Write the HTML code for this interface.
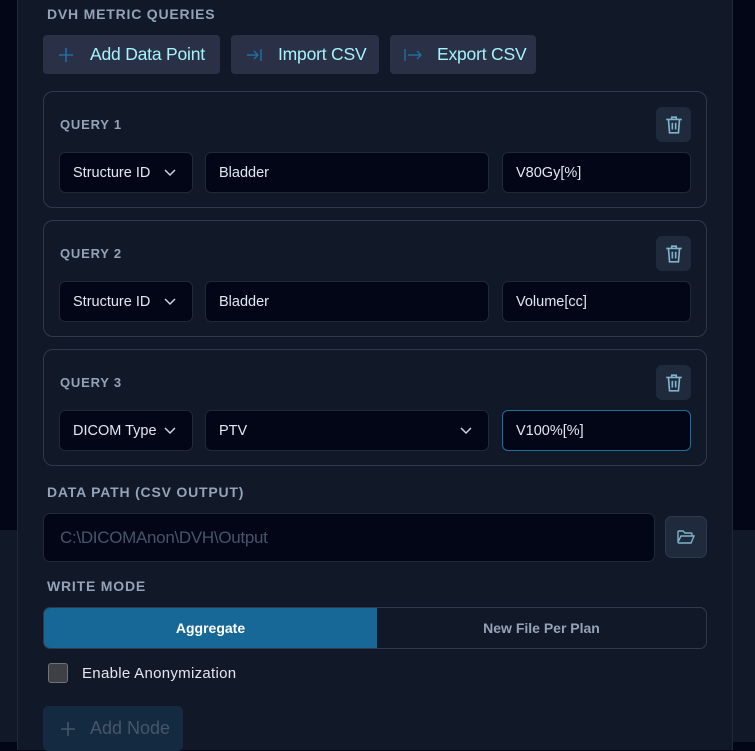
<!DOCTYPE html>
<html><head><style>
*{box-sizing:border-box;margin:0;padding:0}
body{width:755px;height:742px;overflow:hidden;background:#020617;font-family:"Liberation Sans",sans-serif;position:relative}
.abs{position:absolute}
.bgl{left:0;top:530px;width:17px;height:212px;background:#111827}
.bgr{left:733px;top:530px;width:22px;height:212px;background:#111827}
.panel{left:17px;top:-10px;width:716px;height:760px;background:#111827;border-left:1px solid #1e293b;border-right:1px solid #1e293b}
.lbl{color:#94a3b8;font-weight:bold;font-size:14px;letter-spacing:.8px}
.btn{top:35px;height:39px;background:#2a3147;border-radius:4px;color:#a5f3fc;font-size:17.5px;display:flex;align-items:center;letter-spacing:-.2px}
.btn svg{margin:0 16px 0 15px}
.card{left:43px;width:664px;height:117px;border:1px solid #2d3a4e;border-radius:10px}
.ql{left:16px;top:25px;font-size:13px;color:#94a3b8;font-weight:bold;letter-spacing:.8px}
.trash{left:612px;top:15px;width:35px;height:35px;background:#1f2a3c;border-radius:6px;display:flex;align-items:center;justify-content:center}
.in{top:60px;height:41px;background:#020617;border:1px solid #1e293b;border-radius:6px;color:#e2e8f0;font-size:14.5px;display:flex;align-items:center;padding-left:13px}
.chev{position:absolute;right:16px;top:15px}
</style></head><body>
<div class="abs bgl"></div><div class="abs bgr"></div>
<div class="abs panel"></div>
<div class="abs lbl" style="left:47px;top:6px">DVH METRIC QUERIES</div>
<div class="abs btn" style="left:43px;width:177px"><svg width="16" height="16"><path d="M8 1v14M1 8h14" stroke="#1e6fa0" stroke-width="1.6"/></svg>Add Data Point</div>
<div class="abs btn" style="left:231px;width:148px"><svg width="16" height="16"><path d="M1 8h11M8 4l4 4-4 4M15 2v12" stroke="#1e6fa0" stroke-width="1.4" fill="none"/></svg>Import CSV</div>
<div class="abs btn" style="left:390px;width:146px"><svg width="20" height="16" style="margin:0 14px 0 13px"><path d="M2 2v12M5 8h13M14 4l4 4-4 4" stroke="#1e6fa0" stroke-width="1.4" fill="none"/></svg>Export CSV</div>

<div class="abs card" style="top:91px">
<div class="abs ql">QUERY 1</div>
<div class="abs trash"><svg width="20" height="20" viewBox="0 0 18 18" fill="none" stroke="#7fb3c9" stroke-width="1.5"><path d="M2 4h14M7 4V2h4v2M4 4l1 12h8l1-12M7.5 7v6M10.5 7v6"/></svg></div>
<div class="abs in" style="left:15px;width:134px">Structure ID<svg class="chev" width="12" height="10"><path d="M1 2l5 5 5-5" stroke="#cbd5e1" stroke-width="1.5" fill="none"/></svg></div>
<div class="abs in" style="left:161px;width:284px">Bladder</div>
<div class="abs in" style="left:458px;width:189px">V80Gy[%]</div>
</div>
<div class="abs card" style="top:220px">
<div class="abs ql">QUERY 2</div>
<div class="abs trash"><svg width="20" height="20" viewBox="0 0 18 18" fill="none" stroke="#7fb3c9" stroke-width="1.5"><path d="M2 4h14M7 4V2h4v2M4 4l1 12h8l1-12M7.5 7v6M10.5 7v6"/></svg></div>
<div class="abs in" style="left:15px;width:134px">Structure ID<svg class="chev" width="12" height="10"><path d="M1 2l5 5 5-5" stroke="#cbd5e1" stroke-width="1.5" fill="none"/></svg></div>
<div class="abs in" style="left:161px;width:284px">Bladder</div>
<div class="abs in" style="left:458px;width:189px">Volume[cc]</div>
</div>
<div class="abs card" style="top:349px">
<div class="abs ql">QUERY 3</div>
<div class="abs trash"><svg width="20" height="20" viewBox="0 0 18 18" fill="none" stroke="#7fb3c9" stroke-width="1.5"><path d="M2 4h14M7 4V2h4v2M4 4l1 12h8l1-12M7.5 7v6M10.5 7v6"/></svg></div>
<div class="abs in" style="left:15px;width:134px">DICOM Type<svg class="chev" width="12" height="10"><path d="M1 2l5 5 5-5" stroke="#cbd5e1" stroke-width="1.5" fill="none"/></svg></div>
<div class="abs in" style="left:161px;width:284px">PTV<svg class="chev" width="12" height="10"><path d="M1 2l5 5 5-5" stroke="#cbd5e1" stroke-width="1.5" fill="none"/></svg></div>
<div class="abs in" style="left:458px;width:189px;border-color:#1e6fa0">V100%[%]</div>
</div>

<div class="abs lbl" style="left:47px;top:484px">DATA PATH (CSV OUTPUT)</div>
<div class="abs" style="left:43px;top:513px;width:612px;height:49px;background:#020617;border:1px solid #1e293b;border-radius:7px;color:#475569;font-size:17px;padding:14px 0 0 16px;letter-spacing:-.3px">C:\DICOMAnon\DVH\Output</div>
<div class="abs" style="left:665px;top:516px;width:42px;height:42px;background:#1f2a3c;border:1px solid #2d3a4e;border-radius:7px;display:flex;align-items:center;justify-content:center"><svg width="20" height="18" viewBox="0 0 20 18" fill="none" stroke="#7fb3c9" stroke-width="1.4"><path d="M2 14V4a1 1 0 011-1h4l2 2h6a1 1 0 011 1v2M2 14l3-6h13l-3 7H3a1 1 0 01-1-1z"/></svg></div>

<div class="abs lbl" style="left:47px;top:578px">WRITE MODE</div>
<div class="abs" style="left:43px;top:607px;width:664px;height:42px;border:1px solid #2d3a4e;border-radius:7px;overflow:hidden;display:flex">
<div style="width:333px;background:#176896;color:#fff;font-weight:bold;font-size:14px;display:flex;align-items:center;justify-content:center">Aggregate</div>
<div style="flex:1;color:#94a3b8;font-weight:bold;font-size:14px;display:flex;align-items:center;justify-content:center">New File Per Plan</div>
</div>
<div class="abs" style="left:48px;top:663px;width:20px;height:20px;background:#3f3f46;border:1px solid #71717a;border-radius:3px"></div>
<div class="abs" style="left:82px;top:665px;color:#e2e8f0;font-size:15px;letter-spacing:.3px">Enable Anonymization</div>
<div class="abs" style="left:43px;top:706px;width:140px;height:45px;background:#142a40;border-radius:5px;color:#475569;font-size:18px;display:flex;align-items:center"><svg width="16" height="16" style="margin:0 14px 0 17px"><path d="M8 1v14M1 8h14" stroke="#475569" stroke-width="1.6"/></svg>Add Node</div>
</body></html>
